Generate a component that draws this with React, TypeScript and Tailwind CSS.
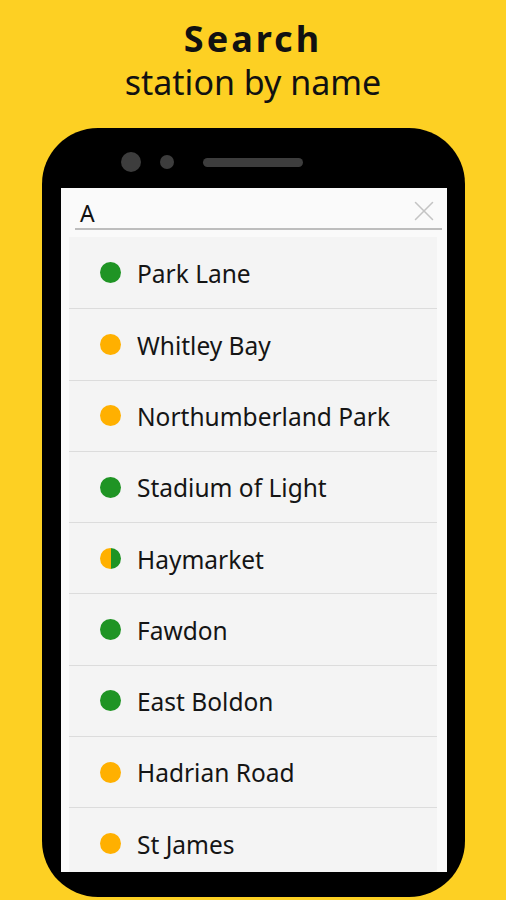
import { X } from "lucide-react";

type Station = { name: string; lines: ("green" | "yellow")[] };

const stations: Station[] = [
  { name: "Park Lane", lines: ["green"] },
  { name: "Whitley Bay", lines: ["yellow"] },
  { name: "Northumberland Park", lines: ["yellow"] },
  { name: "Stadium of Light", lines: ["green"] },
  { name: "Haymarket", lines: ["yellow", "green"] },
  { name: "Fawdon", lines: ["green"] },
  { name: "East Boldon", lines: ["green"] },
  { name: "Hadrian Road", lines: ["yellow"] },
  { name: "St James", lines: ["yellow"] },
];

const Dot = ({ lines }: { lines: Station["lines"] }) => {
  if (lines.length > 1) {
    return (
      <span className="flex w-[21px] h-[21px] rounded-full overflow-hidden shrink-0">
        <span className="w-1/2 h-full bg-[#ffb000]" />
        <span className="w-1/2 h-full bg-[#1f9424]" />
      </span>
    );
  }
  return (
    <span
      className={
        lines[0] === "green"
          ? "w-[21px] h-[21px] rounded-full bg-[#1f9424] shrink-0"
          : "w-[21px] h-[21px] rounded-full bg-[#ffb000] shrink-0"
      }
    />
  );
};

export default function App() {
  return (
    <div
      className="w-[506px] h-[900px] overflow-hidden bg-[#fdd023] flex flex-col items-center"
      style={{ fontFamily: '"Noto Sans", "DejaVu Sans", sans-serif' }}>
      <div className="flex flex-col items-center pt-[16px] h-[128px] text-[#111]">
        <p className="text-[36px] font-bold tracking-[3px] leading-[46px]">Search</p>
        <p className="text-[34px] leading-[40px]">station by name</p>
      </div>

      <div className="ml-[1px] w-[423px] h-[769px] shrink-0 bg-black rounded-[56px] pt-[14px] pl-[19px] pr-[18px] pb-[25px] flex flex-col">
        <div className="flex items-center h-[40px] pl-[60px] mb-[6px]">
          <span className="w-[20px] h-[20px] rounded-full bg-[#3d3d3d]" />
          <span className="ml-[19px] w-[14px] h-[14px] rounded-full bg-[#3d3d3d]" />
          <span className="ml-[29px] w-[100px] h-[9px] rounded-full bg-[#3d3d3d]" />
        </div>

        <div className="flex-1 bg-[#fafafa] flex flex-col overflow-hidden">
          <div className="ml-[14px] mr-[5px] mt-[10px] h-[33px] border-b-2 border-[#bdbdbd] flex items-center justify-between pl-[5px]">
            <span className="text-[23px] text-[#111] leading-none">A</span>
            <X className="w-[34px] h-[34px] text-[#c4c4c4] mr-[1px] -mt-[4px]" strokeWidth={1.1} />
          </div>

          <div className="mt-[7px] mx-[8px] w-[368px] bg-[#f4f4f4] flex flex-col">
            {stations.map((s, i) => (
              <div
                key={s.name}
                className={
                  i === 0
                    ? "h-[71.3px] flex items-center gap-[16px] pl-[31px]"
                    : "h-[71.3px] flex items-center gap-[16px] pl-[31px] border-t border-[#dcdcdc]"
                }>
                <Dot lines={s.lines} />
                <span className="text-[24.5px] text-[#151515] leading-none pt-[3px]">{s.name}</span>
              </div>
            ))}
          </div>
        </div>
      </div>
    </div>
  );
}
